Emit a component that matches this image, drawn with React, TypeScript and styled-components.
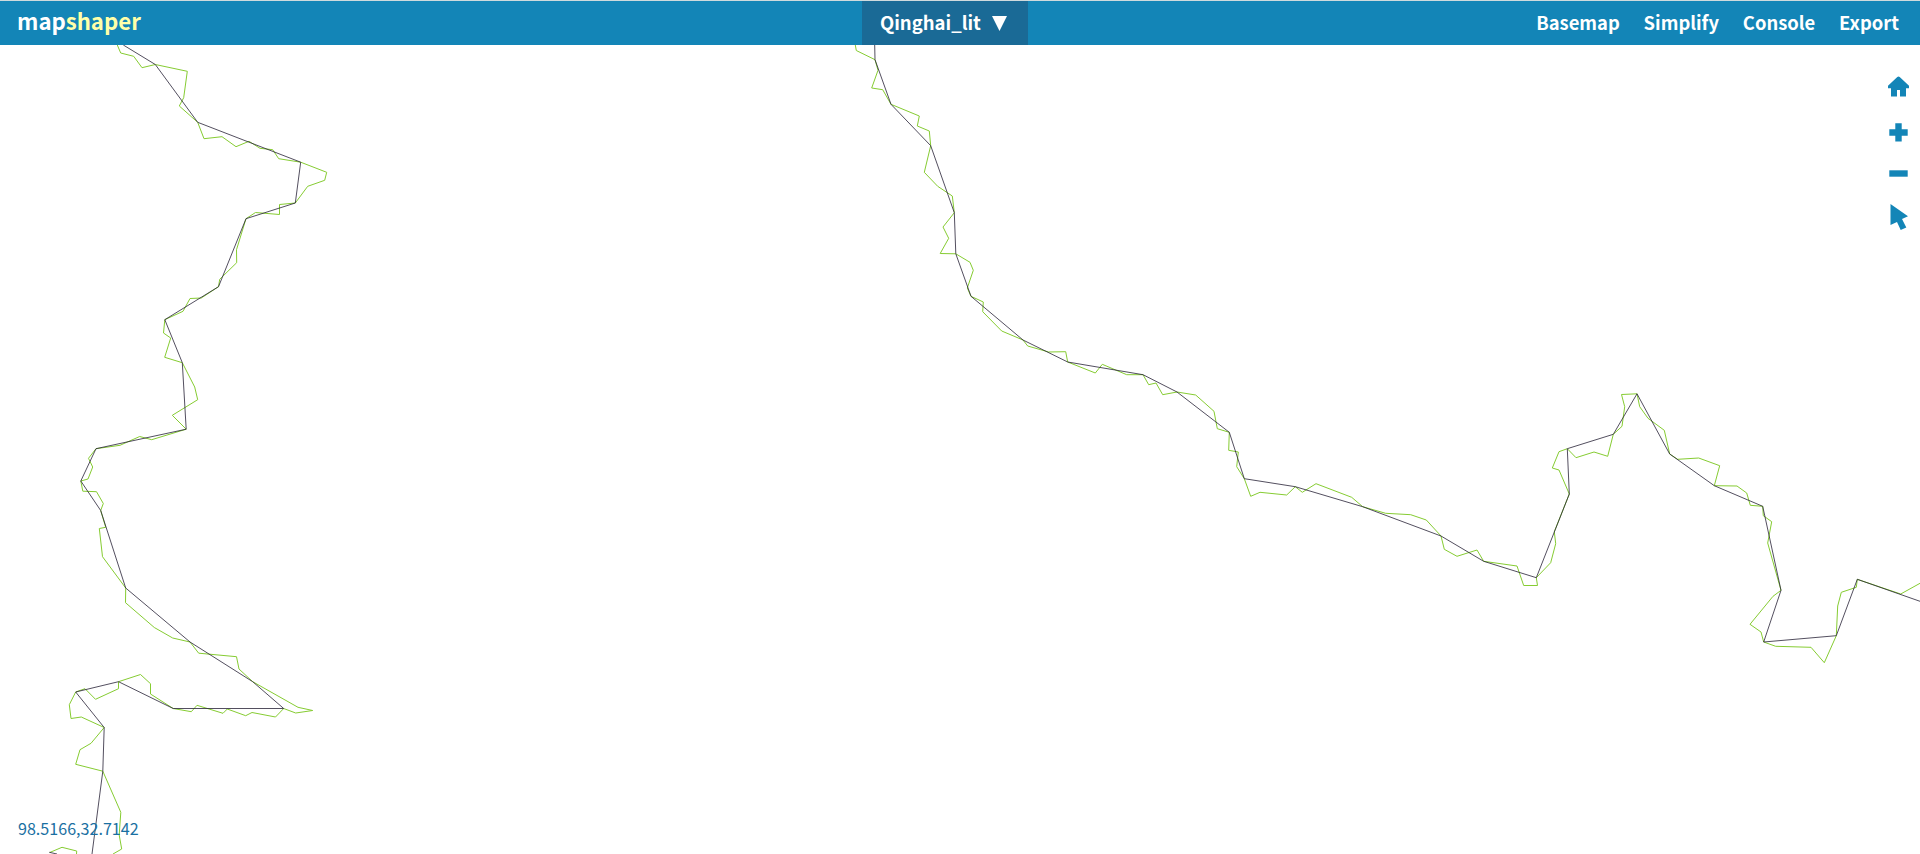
import React from "react";
import styled, { createGlobalStyle } from "styled-components";

const BLUE = "#1385b7";
const DARK_BLUE = "#1a6a96";

const GlobalStyle = createGlobalStyle`
  * { box-sizing: border-box; }
  body {
    margin: 0;
    background: #fff;
    overflow: hidden;
    font-family: "Noto Sans CJK SC", "Open Sans", sans-serif;
  }
`;

const Page = styled.div`
  display: flex;
  flex-direction: column;
  height: 854px;
  width: 1920px;
`;

const Header = styled.header`
  display: grid;
  grid-template-columns: 862px 166px 1fr;
  height: 45px;
  flex: none;
  border-top: 1px solid #cfdadd;
  background: ${BLUE};
  color: #fff;
  font-weight: 700;
  line-height: 44px;
  white-space: nowrap;
`;

const Logo = styled.div`
  padding-left: 17px;
  font-size: 22.2px;
  line-height: 39px;
`;

const LogoAccent = styled.span`
  color: #ffffa9;
`;

const LayerButton = styled.div`
  display: flex;
  align-items: center;
  padding-left: 18px;
  gap: 11px;
  background: ${DARK_BLUE};
  font-size: 18.5px;
  line-height: 42px;
`;

const LayerName = styled.span`
  padding-bottom: 2px;
`;

const Nav = styled.nav`
  display: flex;
  justify-content: flex-end;
  gap: 23.8px;
  padding-right: 21px;
  font-size: 18.4px;
  line-height: 42px;
`;

const MapPane = styled.main`
  position: relative;
  flex: 1;
`;

const MapLayer = styled.svg`
  display: block;
  width: 1920px;
  height: 809px;
`;

const Line = styled.polyline<{ $tone: string }>`
  fill: none;
  stroke: ${(p) => p.$tone};
  stroke-width: 1;
`;

const Tools = styled.div`
  position: absolute;
  top: 31px;
  right: 11px;
  display: flex;
  flex-direction: column;
  align-items: center;
`;

const ToolIcon = styled.svg<{ $gap?: number }>`
  display: block;
  fill: ${BLUE};
  margin-bottom: ${(p) => p.$gap ?? 0}px;
`;

const Coordinates = styled.div`
  position: absolute;
  left: 18px;
  bottom: 14px;
  color: #1a70a2;
  font-size: 16.1px;
  line-height: 24px;
`;

const detailed = [
  `117.3,45 120.7,53 133.7,56.3 142,67.7 155.3,64.5 187.3,71.3 183.7,97.7 179.3,106 197.7,122.3 204,138.7
   222,136.7 236,146.7 249,141.3 260,148.3 272.7,149.7 278.7,158.7 300.7,162.2 326.7,172.3 324.7,180.3
   307.7,186.3 295.3,203 279.5,204.5 279.5,214.5 255.5,212.5 246,218.7 236.5,249.7 236.7,262.7 219.7,279.3
   218.5,286.7 201.3,298 190,298.5 183,311.3 164.8,319.7 163.5,333 170.7,338 164.7,357.3 182.3,362.7
   194.7,387 197.7,399.7 172.3,415.3 186.2,429.2 151.7,439.7 139.7,436.5 120,445.3 96,448.7 88.5,458.3
   92.7,467 88,479 80.8,481 82.8,491.2 96.5,491.7 103.3,503.5 100.7,510.5 105.7,527.3 99.3,528.5
   102.5,556.7 125.7,588 125.5,602.7 154.3,627.5 172.7,638 190,642 198.7,653.2 236.5,656.7 239,669
   252.7,681.7 298,707.3 312.7,710.5 295.7,713 283.7,708.5 275.5,717 252,712.5 245.7,715.7 227.3,709
   223,713.3 197,705.3 191.3,711.7 173.2,708.5 150.5,694 150.5,683.7 140.5,674.5 118.5,681.7 118.5,688.7
   95.5,699.3 85,688.7 75.7,692 69.3,704.7 71,718.5 81.3,717 104.2,727.5 91,743.3 80,749.7 75.7,764.3
   102.8,771.2 120.8,812.3 119.2,835 121.7,849 113,854`,
  `49.7,852.5 62,847.3 76.7,851 76.5,854`,
  `855.3,45 856.3,50.5 875,59.7 878,70.3 871.7,88 882.7,89.7 891,104.3 919.3,116 917.3,126 929.3,131
   930.7,145.7 924.3,172.3 937.7,186.3 952.3,196 954.3,212.7 943,227 948.7,238.3 940.2,253.5 955.8,253.8
   970,262.3 973.3,270.3 967.3,288 971,296.3 983.3,302 982.7,311.7 1001.7,331 1023,340 1027.7,346
   1048.7,352 1065.7,351.7 1067.7,362 1095.3,373 1102.3,364.3 1126.7,374.7 1143,374.7 1148.7,384.7
   1156,383 1162.7,394.7 1177,392 1195.7,395 1214,411.3 1217.3,428.7 1229.3,432.3 1228.7,450.3
   1238.3,452 1236.7,466.7 1244.3,478.7 1250.7,496.3 1260,492.3 1286.7,495 1295.3,486.7 1302.3,492.3
   1316,483.7 1351.7,497.3 1362.7,506.7 1385.7,513.3 1410.7,514.7 1426.3,520 1441,536 1444.3,549.3
   1457,556.3 1477,550 1483.7,561.3 1517,566 1523.7,585.5 1537.5,585.5 1536.3,577.7 1550.7,562.7
   1555.7,543.7 1554.3,531.7 1569.3,494 1559,470 1552.3,468 1559,451.7 1567.3,448.7 1576,457.7 1594,452
   1607.7,456.3 1613.3,434.3 1622,426.3 1624.7,406.7 1621.5,394.5 1637,393.8 1639.7,406.7 1648,418.3
   1664.3,430.3 1669.7,454 1677.7,459.3 1698.7,458 1719.7,465.7 1714.3,485.7 1737,486 1746.7,493
   1750.3,505.3 1762.7,506.3 1763.3,515.7 1771.7,521.7 1767.7,543 1781,590.3 1773,596.3 1750,624.3
   1761,632 1763.7,642 1775.7,646.3 1811,647.3 1824.3,662.7 1836.3,635.7 1837.7,606 1841.3,592.3
   1856.3,587.3 1857.3,579.3 1900.7,594 1920,583.3`,
];

const simplified = [
  `123.3,45 155.3,64.5 197.7,122.3 300.7,162.2 295.3,203 246,218.7 218.5,286.7 164.8,319.7 182.3,362.7
   186.2,429.2 96,448.7 80.8,481 100.7,510.5 125.7,588 190,642 252.7,681.7 283.7,708.5 173.2,708.5
   118.5,681.7 75.7,692 104.2,727.5 102.8,771.2 92,854`,
  `49.3,852.3 57,854`,
  `874.7,45 875,59.7 891,104.3 930.7,145.7 954.3,212.7 955.8,253.8 971,296.3 1023,340 1067.7,362
   1143,374.7 1177,392 1229.3,432.3 1244.3,478.7 1295.3,486.7 1362.7,506.7 1441,536 1483.7,561.3
   1536.3,577.7 1569.3,494 1567.3,448.7 1613.3,434.3 1637,393.8 1669.7,454 1714.3,485.7 1762.7,506.3
   1781,590.3 1763.7,642 1836.3,635.7 1857.3,579.3 1920,601.3`,
];

const menu = ["Basemap", "Simplify", "Console", "Export"];

export default function App() {
  return (
    <Page>
      <GlobalStyle />
      <Header>
        <Logo>
          map<LogoAccent>shaper</LogoAccent>
        </Logo>
        <LayerButton>
          <LayerName>Qinghai_lit</LayerName>
          <svg width="15" height="15" viewBox="0 0 15 15" fill="#fff">
            <path d="M0 0H15L7.5 15Z" />
          </svg>
        </LayerButton>
        <Nav>
          {menu.map((item) => (
            <span key={item}>{item}</span>
          ))}
        </Nav>
      </Header>
      <MapPane>
        <MapLayer viewBox="0 45 1920 809">
          {detailed.map((points, i) => (
            <Line key={i} $tone="#86cc32" points={points} />
          ))}
          {simplified.map((points, i) => (
            <Line key={i} $tone="rgba(40, 35, 55, 0.8)" points={points} />
          ))}
        </MapLayer>
        <Tools>
          <ToolIcon $gap={26} width="21" height="21" viewBox="0 0 21 21">
            <path d="M9.3 1Q10.5 0 11.7 1L21 9.8V12.3H18V20.6H12V14H9V20.6H3V12.3H0V9.8Z" />
          </ToolIcon>
          <ToolIcon $gap={28} width="19" height="19" viewBox="0 0 19 19">
            <path d="M6.3 .3H12.7V6.3H18.7V12.7H12.7V18.5H6.3V12.7H.3V6.3H6.3Z" />
          </ToolIcon>
          <ToolIcon $gap={27} width="19" height="7" viewBox="0 0 19 7">
            <path d="M.3 .3H18.7V6.7H.3Z" />
          </ToolIcon>
          <ToolIcon width="19" height="26" viewBox="0 0 19 26">
            <path d="M1.5 0L19 12.3L13 15L17.3 23.5L11.7 26L8 18L1.5 21Z" />
          </ToolIcon>
        </Tools>
        <Coordinates>98.5166,32.7142</Coordinates>
      </MapPane>
    </Page>
  );
}
